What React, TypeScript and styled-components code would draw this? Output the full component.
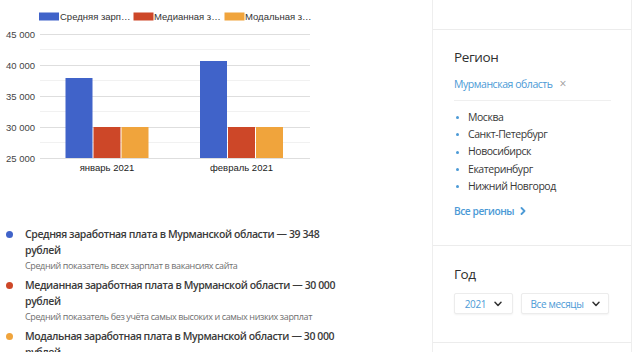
import React from "react";
import styled, { createGlobalStyle } from "styled-components";

const Global = createGlobalStyle`
  html, body { margin: 0; padding: 0; background: #fff; }
  body { font-family: "Open Sans", "Noto Sans", sans-serif; color: #333; }
  * { box-sizing: border-box; }
`;

const Page = styled.div`
  display: flex;
  align-items: flex-start;
  width: 640px;
  height: 352px;
  overflow: hidden;
`;

const Main = styled.div`
  width: 432px;
  flex: none;
  display: flex;
  flex-direction: column;
  & > * { flex: none; }
`;

const ChartSvg = styled.svg`
  display: block;
  font-family: "Liberation Sans", Arial, sans-serif;
`;

const Stats = styled.ul`
  list-style: none;
  margin: 50px 0 0;
  padding: 0;
  display: flex;
  flex-direction: column;
  gap: 5px;
`;

const Stat = styled.li`
  display: flex;
  align-items: flex-start;
  gap: 12px;
  padding-left: 6px;
`;

const Dot = styled.span<{ $color: string }>`
  flex: none;
  width: 7px;
  height: 7px;
  margin-top: 5px;
  border-radius: 50%;
  background: ${(p) => p.$color};
`;

const StatText = styled.div`
  width: 322px;
  display: flex;
  flex-direction: column;
`;

const StatTitle = styled.div`
  font-size: 10.5px;
  line-height: 16px;
  font-weight: 600;
  letter-spacing: -0.4px;
  color: #3a3a3a;
`;

const StatNote = styled.div`
  font-size: 9px;
  line-height: 13px;
  letter-spacing: -0.38px;
  color: #6f6f6f;
  margin-top: 1px;
`;

const Sidebar = styled.aside`
  width: 200px;
  height: 352px;
  flex: none;
  border-left: 1px solid #eeeeee;
  border-right: 1px solid #eeeeee;
  display: flex;
  flex-direction: column;
`;

const Section = styled.section<{ $h: number; $top?: number }>`
  height: ${(p) => p.$h}px;
  flex: none;
  border-bottom: 1px solid #ececec;
  padding: ${(p) => p.$top ?? 0}px 20px 0 21px;
`;

const Heading = styled.h3`
  margin: 0;
  font-size: 13.5px;
  line-height: 20px;
  font-weight: 500;
  letter-spacing: -0.4px;
  color: #2f2f2f;
`;

const Chosen = styled.div`
  display: flex;
  align-items: center;
  gap: 7px;
  margin-top: 9px;
  padding-bottom: 8px;
  border-bottom: 1px solid #efefef;
  font-size: 10.5px;
  line-height: 16px;
  letter-spacing: -0.45px;
  color: #4c9ad6;
`;

const Remove = styled.span`
  color: #9a9a9a;
  font-size: 12px;
  line-height: 16px;
  letter-spacing: 0;
`;

const Regions = styled.ul`
  list-style: none;
  margin: 8px 0 0;
  padding: 0;
  display: flex;
  flex-direction: column;
`;

const Region = styled.li`
  display: flex;
  align-items: center;
  gap: 9px;
  padding-left: 2px;
  font-size: 10.5px;
  line-height: 17.2px;
  letter-spacing: -0.45px;
  color: #383838;
  &::before {
    content: "";
    width: 3px;
    height: 3px;
    border-radius: 50%;
    background: #4c9ad6;
  }
`;

const AllLink = styled.a`
  display: flex;
  align-items: center;
  gap: 6px;
  margin-top: 8px;
  font-size: 10.2px;
  line-height: 16px;
  font-weight: 600;
  letter-spacing: -0.45px;
  color: #4c9ad6;
  text-decoration: none;
`;

const Selects = styled.div`
  display: flex;
  gap: 8px;
  margin-top: 9px;
`;

const Select = styled.button<{ $w: number }>`
  width: ${(p) => p.$w}px;
  height: 21px;
  display: flex;
  align-items: center;
  justify-content: center;
  gap: 8px;
  padding: 0;
  background: #fff;
  border: 1px solid #ececec;
  border-radius: 2px;
  box-shadow: 0 1px 2px rgba(0, 0, 0, 0.05);
  font-family: "Open Sans", "Noto Sans", sans-serif;
  font-size: 10px;
  letter-spacing: -0.35px;
  color: #4c9ad6;
`;

const Chevron = () => (
  <svg width="8" height="6" viewBox="0 0 8 6" aria-hidden>
    <path
      d="M1 1.2 L4 4.4 L7 1.2"
      fill="none"
      stroke="#333"
      strokeWidth="1.5"
      strokeLinecap="round"
      strokeLinejoin="round"
    />
  </svg>
);

const RightChevron = () => (
  <svg width="6" height="8" viewBox="0 0 6 8" aria-hidden>
    <path
      d="M1.5 1 L4.5 4 L1.5 7"
      fill="none"
      stroke="#4c9ad6"
      strokeWidth="1.8"
      strokeLinecap="round"
      strokeLinejoin="round"
    />
  </svg>
);

const BLUE = "#4063c9";
const RED = "#cd4728";
const ORANGE = "#f0a43c";

const yTicks = [
  { y: 34, label: "45 000" },
  { y: 65, label: "40 000" },
  { y: 96, label: "35 000" },
  { y: 127, label: "30 000" },
  { y: 158, label: "25 000" },
];

const groups = [
  { x: 65.5, label: "январь 2021", cx: 107, tops: [78, 127, 127] },
  { x: 200, label: "февраль 2021", cx: 241.5, tops: [61, 127, 127] },
];

const Chart = () => (
  <ChartSvg width="313" height="176" viewBox="0 0 313 176">
    <rect x="39" y="12.5" width="20" height="8" fill={BLUE} />
    <text x="60" y="20" fontSize="9.5" fill="#333">Средняя зарп…</text>
    <rect x="133.5" y="12.5" width="20" height="8" fill={RED} />
    <text x="154" y="20" fontSize="9.5" fill="#333">Медианная з…</text>
    <rect x="224.5" y="12.5" width="20" height="8" fill={ORANGE} />
    <text x="245" y="20" fontSize="9.5" fill="#333">Модальная з…</text>

    {[49.5, 80.5, 111.5, 142.5].map((y) => (
      <line key={y} x1="40" x2="310" y1={y} y2={y} stroke="#f1f1f1" strokeWidth="1" />
    ))}
    {yTicks.map((t) => (
      <g key={t.y}>
        <line x1="40" x2="310" y1={t.y + 0.5} y2={t.y + 0.5} stroke="#dedede" strokeWidth="1" />
        <text x="35" y={t.y + 3.5} fontSize="9.5" fill="#444" textAnchor="end">
          {t.label}
        </text>
      </g>
    ))}
    {groups.map((g) => (
      <g key={g.label}>
        {[BLUE, RED, ORANGE].map((c, i) => (
          <rect
            key={c}
            x={g.x + i * 28}
            y={g.tops[i]}
            width="27"
            height={158 - g.tops[i]}
            fill={c}
          />
        ))}
        <text x={g.cx} y="171" fontSize="9.5" fill="#222" textAnchor="middle">
          {g.label}
        </text>
      </g>
    ))}
  </ChartSvg>
);

const stats = [
  {
    color: BLUE,
    title: "Средняя заработная плата в Мурманской области — 39 348 рублей",
    note: "Средний показатель всех зарплат в вакансиях сайта",
  },
  {
    color: RED,
    title: "Медианная заработная плата в Мурманской области — 30 000 рублей",
    note: "Средний показатель без учёта самых высоких и самых низких зарплат",
  },
  {
    color: ORANGE,
    title: "Модальная заработная плата в Мурманской области — 30 000 рублей",
    note: "Наиболее часто встречающаяся зарплата в вакансиях",
  },
];

const regions = ["Москва", "Санкт-Петербург", "Новосибирск", "Екатеринбург", "Нижний Новгород"];

export default function App() {
  return (
    <Page>
      <Global />
      <Main>
        <Chart />
        <Stats>
          {stats.map((s) => (
            <Stat key={s.title}>
              <Dot $color={s.color} />
              <StatText>
                <StatTitle>{s.title}</StatTitle>
                <StatNote>{s.note}</StatNote>
              </StatText>
            </Stat>
          ))}
        </Stats>
      </Main>
      <Sidebar>
        <Section $h={30} />
        <Section $h={216} $top={17}>
          <Heading>Регион</Heading>
          <Chosen>
            Мурманская область <Remove>×</Remove>
          </Chosen>
          <Regions>
            {regions.map((r) => (
              <Region key={r}>{r}</Region>
            ))}
          </Regions>
          <AllLink href="#">
            Все регионы <RightChevron />
          </AllLink>
        </Section>
        <Section $h={97} $top={18}>
          <Heading>Год</Heading>
          <Selects>
            <Select $w={59}>
              2021 <Chevron />
            </Select>
            <Select $w={88}>
              Все месяцы <Chevron />
            </Select>
          </Selects>
        </Section>
        <Section $h={40} />
      </Sidebar>
    </Page>
  );
}
